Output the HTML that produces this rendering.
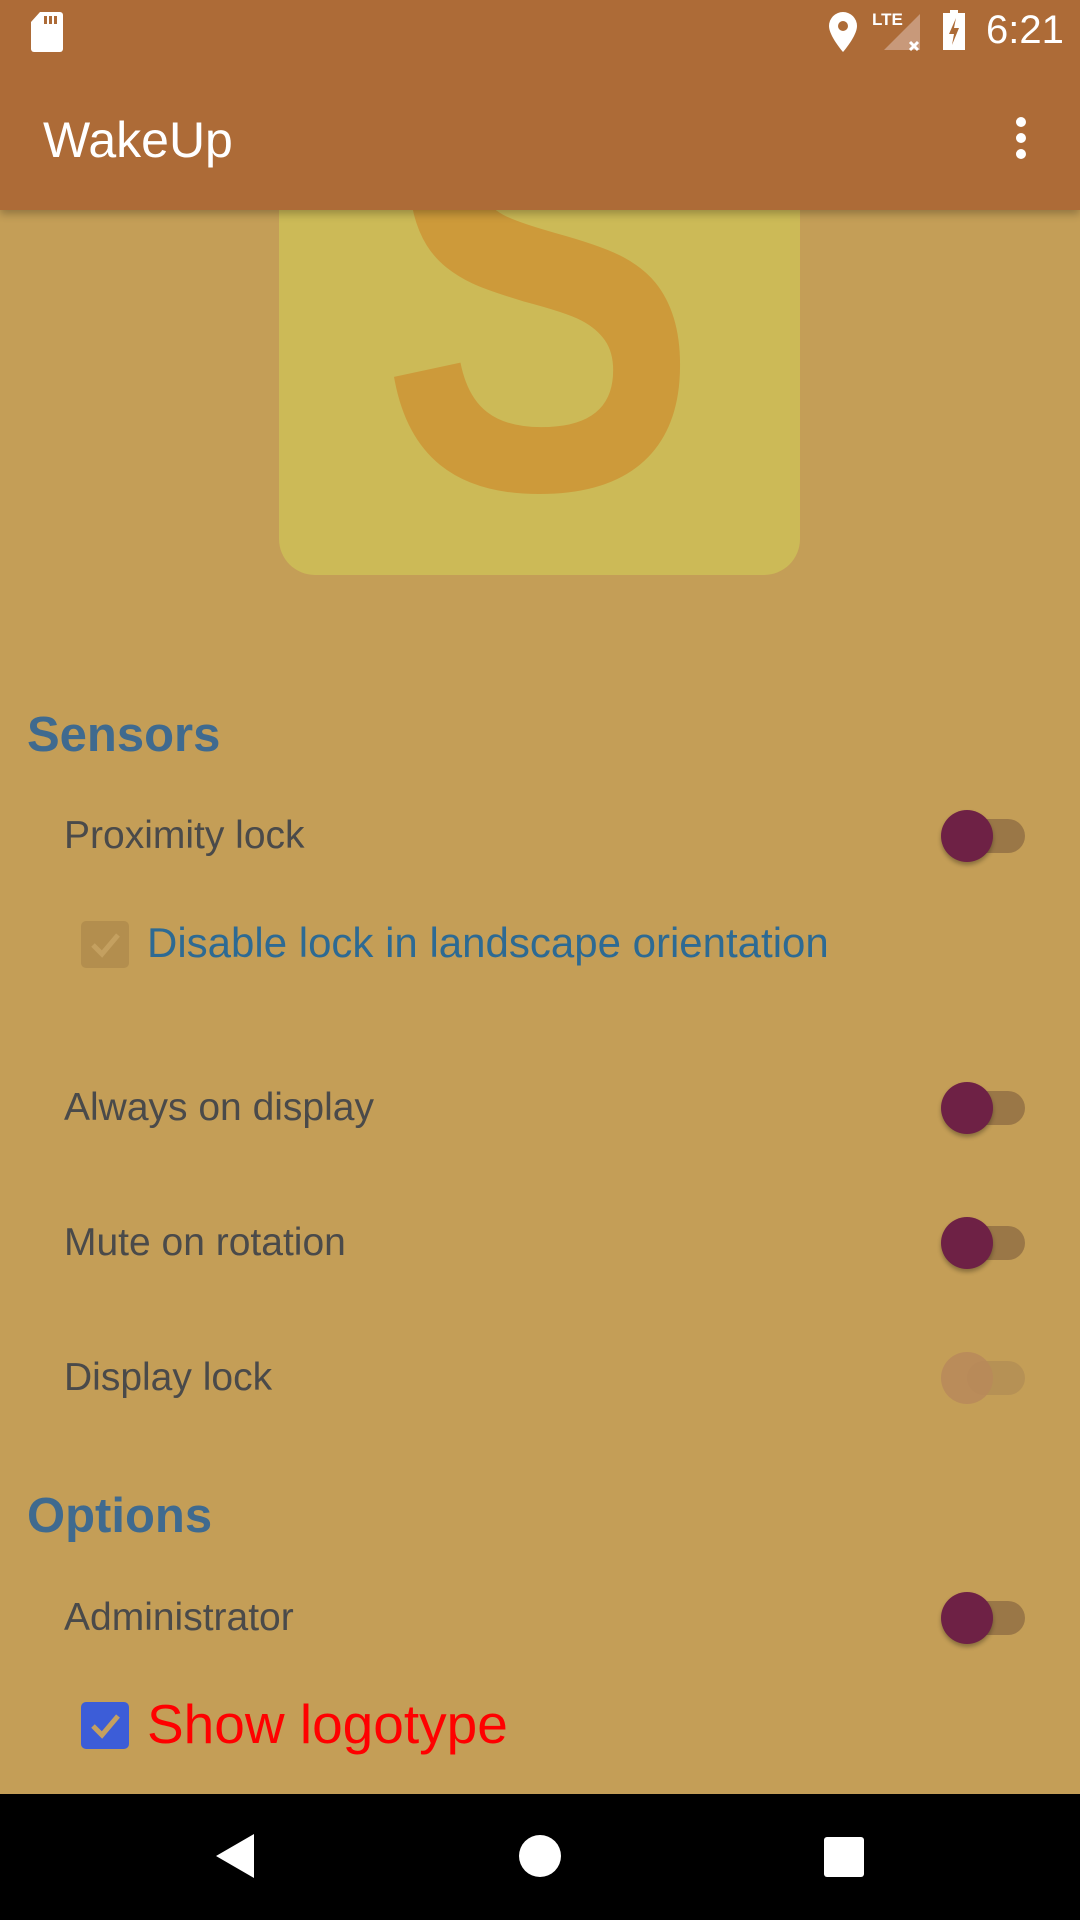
<!DOCTYPE html>
<html><head><meta charset="utf-8"><style>
*{margin:0;padding:0;box-sizing:border-box}
body{width:1080px;height:1920px;background:#C49E57;position:relative;overflow:hidden;font-family:"Liberation Sans",sans-serif}
.abs{position:absolute}
.sb{left:0;top:0;width:1080px;height:210px;background:#AD6B37;box-shadow:0 4px 8px rgba(0,0,0,.25);z-index:5}
.lbl{position:absolute;left:64px;font-size:39px;color:#4a4a4a;line-height:44px}
.hdr{position:absolute;left:27px;font-size:49px;font-weight:bold;color:#3F6A8F;line-height:56px}
.tr{position:absolute;left:967px;width:58px;height:34px;border-radius:17px;background:#9A7747}
.th{position:absolute;left:941px;width:52px;height:52px;border-radius:50%;background:#6E2145;box-shadow:0 3px 4px rgba(0,0,0,.3)}
</style></head><body>
<div class="abs sb">
  <svg class="abs" style="left:30px;top:12px" width="34" height="40" viewBox="0 0 34 40"><path d="M10 0H30a3 3 0 0 1 3 3V37a3 3 0 0 1-3 3H4a3 3 0 0 1-3-3V10Z" fill="#fff"/><rect x="14" y="4" width="3" height="8" fill="#AD6B37"/><rect x="19" y="4" width="3" height="8" fill="#AD6B37"/><rect x="24" y="4" width="3" height="8" fill="#AD6B37"/></svg>
  <svg class="abs" style="left:829px;top:12px" width="28" height="40" viewBox="0 0 28 40"><path d="M14 0a14 14 0 0 1 14 14c0 10-14 26-14 26S0 24 0 14A14 14 0 0 1 14 0Z" fill="#fff"/><circle cx="14" cy="14" r="5" fill="#AD6B37"/></svg>
  <div class="abs" style="left:872px;top:10px;color:#fff;font-size:17px;font-weight:bold">LTE</div>
  <svg class="abs" style="left:884px;top:14px" width="40" height="40" viewBox="0 0 40 40"><path d="M36 0V36H0Z" fill="#C8997A"/><path d="M26 28l8 8M34 28l-8 8" stroke="#fff" stroke-width="3"/></svg>
  <svg class="abs" style="left:943px;top:10px" width="22" height="40" viewBox="0 0 22 40"><rect x="7" y="0" width="8" height="4" fill="#fff"/><rect x="0" y="3" width="22" height="37" fill="#fff"/><path d="M13 8L6 24H11L9 35L16 18H11Z" fill="#AD6B37"/></svg>
  <div class="abs" style="left:986px;top:8px;color:#fff;font-size:40px">6:21</div>
  <div class="abs" style="left:43px;top:110px;color:#fff;font-size:50px;line-height:60px">WakeUp</div>
  <div class="abs" style="left:1016px;top:117px;width:10px;height:10px;border-radius:50%;background:#fff"></div>
  <div class="abs" style="left:1016px;top:133px;width:10px;height:10px;border-radius:50%;background:#fff"></div>
  <div class="abs" style="left:1016px;top:149px;width:10px;height:10px;border-radius:50%;background:#fff"></div>
</div>
<div class="abs" style="left:279px;top:150px;width:521px;height:425px;background:#CCBA57;border-radius:0 0 36px 36px;overflow:hidden">
  <div class="abs" style="left:0;top:-186px;width:521px;text-align:center;font-size:620px;font-weight:bold;color:#CD9A3A;line-height:620px;transform:scaleX(0.77);transform-origin:center">S</div>
</div>
<div class="hdr" style="top:707px">Sensors</div>
<div class="lbl" style="top:814px">Proximity lock</div>
<div class="tr" style="top:819px"></div><div class="th" style="top:810px"></div>
<div class="abs" style="left:81px;top:921px;width:48px;height:47px;border-radius:5px;background:#B38E4E"></div>
<svg class="abs" style="left:81px;top:921px" width="48" height="47"><path d="M12 24l9 9 16-19" stroke="#C4A060" stroke-width="5" fill="none"/></svg>
<div class="abs" style="left:147px;top:919px;font-size:42px;color:#2D6A93">Disable lock in landscape orientation</div>
<div class="lbl" style="top:1086px">Always on display</div>
<div class="tr" style="top:1091px"></div><div class="th" style="top:1082px"></div>
<div class="lbl" style="top:1221px">Mute on rotation</div>
<div class="tr" style="top:1226px"></div><div class="th" style="top:1217px"></div>
<div class="lbl" style="top:1356px">Display lock</div>
<div class="tr" style="top:1361px;background:#B69155"></div><div class="th" style="top:1352px;background:#B8885A;opacity:.85;box-shadow:none"></div>
<div class="hdr" style="top:1488px">Options</div>
<div class="lbl" style="top:1596px">Administrator</div>
<div class="tr" style="top:1601px"></div><div class="th" style="top:1592px"></div>
<div class="abs" style="left:81px;top:1702px;width:48px;height:47px;border-radius:5px;background:#3C5DD8"></div>
<svg class="abs" style="left:81px;top:1702px" width="48" height="47"><path d="M12 24l9 9 16-19" stroke="#C4A060" stroke-width="5" fill="none"/></svg>
<div class="abs" style="left:147px;top:1692px;font-size:55px;color:#FF0000">Show logotype</div>
<div class="abs" style="left:0;top:1794px;width:1080px;height:126px;background:#000"></div>
<svg class="abs" style="left:216px;top:1834px" width="40" height="44"><path d="M38 0V44L0 22Z" fill="#fff"/></svg>
<div class="abs" style="left:519px;top:1835px;width:42px;height:42px;border-radius:50%;background:#fff"></div>
<div class="abs" style="left:824px;top:1837px;width:40px;height:40px;border-radius:3px;background:#fff"></div>
</body></html>
